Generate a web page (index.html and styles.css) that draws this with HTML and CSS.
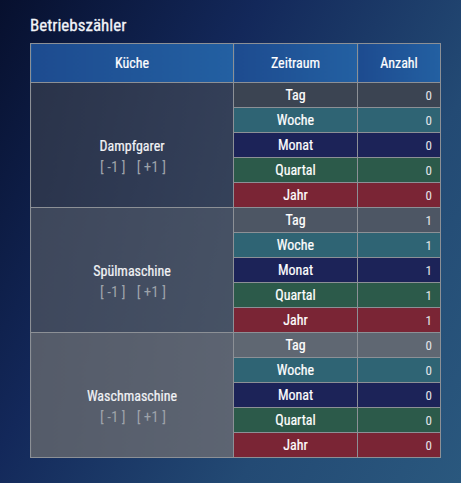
FILE: index.html
```html
<!DOCTYPE html>
<html lang="de">
<head>
<meta charset="utf-8">
<title>Betriebszähler</title>
<link rel="stylesheet" href="styles.css">
</head>
<body>
<div class="page">
  <h1 class="title">Betriebszähler</h1>
  <table class="counter">
    <colgroup><col class="c-dev"><col class="c-per"><col class="c-cnt"></colgroup>
    <thead>
      <tr><th>Küche</th><th>Zeitraum</th><th>Anzahl</th></tr>
    </thead>
    <tbody class="g1">
      <tr class="r-tag"><td class="dev" rowspan="5"><div class="name">Dampfgarer</div><div class="btns"><span>[ -1 ]</span><span>[ +1 ]</span></div></td><td class="per">Tag</td><td class="cnt">0</td></tr>
      <tr class="r-woche"><td class="per">Woche</td><td class="cnt">0</td></tr>
      <tr class="r-monat"><td class="per">Monat</td><td class="cnt">0</td></tr>
      <tr class="r-quartal"><td class="per">Quartal</td><td class="cnt">0</td></tr>
      <tr class="r-jahr"><td class="per">Jahr</td><td class="cnt">0</td></tr>
    </tbody>
    <tbody class="g2">
      <tr class="r-tag"><td class="dev" rowspan="5"><div class="name">Spülmaschine</div><div class="btns"><span>[ -1 ]</span><span>[ +1 ]</span></div></td><td class="per">Tag</td><td class="cnt">1</td></tr>
      <tr class="r-woche"><td class="per">Woche</td><td class="cnt">1</td></tr>
      <tr class="r-monat"><td class="per">Monat</td><td class="cnt">1</td></tr>
      <tr class="r-quartal"><td class="per">Quartal</td><td class="cnt">1</td></tr>
      <tr class="r-jahr"><td class="per">Jahr</td><td class="cnt">1</td></tr>
    </tbody>
    <tbody class="g3">
      <tr class="r-tag"><td class="dev" rowspan="5"><div class="name">Waschmaschine</div><div class="btns"><span>[ -1 ]</span><span>[ +1 ]</span></div></td><td class="per">Tag</td><td class="cnt">0</td></tr>
      <tr class="r-woche"><td class="per">Woche</td><td class="cnt">0</td></tr>
      <tr class="r-monat"><td class="per">Monat</td><td class="cnt">0</td></tr>
      <tr class="r-quartal"><td class="per">Quartal</td><td class="cnt">0</td></tr>
      <tr class="r-jahr"><td class="per">Jahr</td><td class="cnt">0</td></tr>
    </tbody>
  </table>
</div>
</body>
</html>
```
FILE: styles.css
```css
html, body {
  margin: 0;
  padding: 0;
  height: 100%;
}
body {
  background: linear-gradient(120deg, #07102e 0%, #13285a 35%, #234a74 70%, #2a587e 100%);
  font-family: "Roboto Condensed", "Liberation Sans Narrow", Roboto, sans-serif;
  color: #fff;
  overflow: hidden;
}
.page {
  padding: 15px 0 0 30px;
}
.title {
  margin: 0 0 7px 0;
  font-size: 17px;
  line-height: 21px;
  font-weight: 400;
  -webkit-text-stroke: 0.3px currentColor;
  color: #f2f4f8;
}
.counter {
  border-collapse: collapse;
  table-layout: fixed;
  width: 410px;
  font-size: 14px;
  font-weight: 400;
}
.c-dev { width: 203px; }
.c-per { width: 124px; }
.c-cnt { width: 83px; }
.counter th, .counter td {
  border: 1px solid #8c9096;
  padding: 0;
}
.counter th {
  height: 38px;
  background: linear-gradient(90deg, #1d4b8f, #2360a2);
  font-weight: 400;
  -webkit-text-stroke: 0.2px currentColor;
  text-align: center;
}
.counter td.per, .counter td.cnt {
  height: 24px;
}
.per {
  text-align: center;
  -webkit-text-stroke: 0.2px currentColor;
}
.cnt {
  text-align: right;
  padding-right: 8px !important;
  color: #e4e6ea;
  font-size: 13px;
}
.dev {
  text-align: center;
  vertical-align: middle;
  padding-top: 24px !important;
}
.name {
  color: #f2f3f6;
  font-size: 14px;
  margin-bottom: 4px;
  -webkit-text-stroke: 0.2px currentColor;
}
.btns {
  display: flex;
  justify-content: center;
  gap: 11px;
  color: #9ea3aa;
  font-size: 15px;
  font-weight: 400;
  padding-left: 2px;
}
.g1 .dev { background: linear-gradient(90deg, rgba(52,60,78,0.75), rgba(62,70,86,0.75)); }
.g2 .dev { background: linear-gradient(90deg, rgba(70,78,94,0.85), rgba(78,86,100,0.85)); }
.g3 .dev { background: linear-gradient(90deg, rgba(88,94,106,0.95), rgba(96,102,114,0.95)); }
.g1 .r-tag .per, .g1 .r-tag .cnt { background: #3b4452; }
.g2 .r-tag .per, .g2 .r-tag .cnt { background: #4d5664; }
.g3 .r-tag .per, .g3 .r-tag .cnt { background: #5f6772; }
.r-woche td { background: #2f6474; }
.r-monat td { background: #1c2358; }
.r-quartal td { background: #2c5a4a; }
.r-jahr td { background: #7a2535; }
```
